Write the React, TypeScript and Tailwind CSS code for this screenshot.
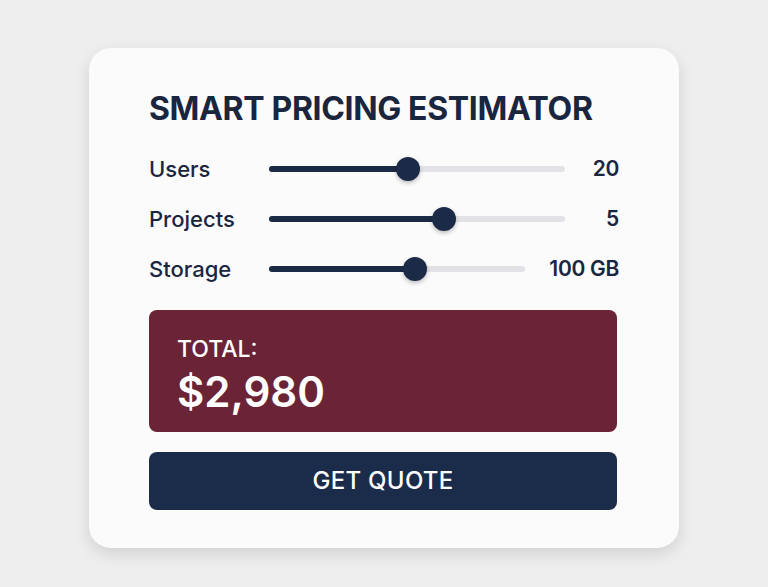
import React from "react";

const rows = [
  { label: "Users", value: "20", track: "w-[296px]", pct: 47 },
  { label: "Projects", value: "5", track: "w-[296px]", pct: 59 },
  { label: "Storage", value: "100 GB", track: "w-[256px]", pct: 57 },
];

function Slider({ track, pct }: { track: string; pct: number }) {
  return (
    <div className={`relative h-[6px] rounded-full bg-[#e3e3e7] ${track}`}>
      <div className="h-full rounded-full bg-[#1b2a47]" style={{ width: `${pct}%` }} />
      <div
        className="absolute top-1/2 h-[24px] w-[24px] -translate-x-1/2 -translate-y-1/2 rounded-full bg-[#1b2a47] shadow-[0_2px_4px_rgba(0,0,0,0.25)]"
        style={{ left: `${pct}%` }}
      />
    </div>
  );
}

export default function App() {
  return (
    <div className="min-h-[587px] w-full bg-[#eeeeee] pt-[48px] font-['Inter',sans-serif] text-[#1a2540]">
      <div className="mx-auto h-[500px] w-[590px] rounded-[22px] bg-[#fcfbfc] px-[60px] pt-[42px] shadow-[0_6px_16px_rgba(0,0,0,0.12)]">
        <h1 className="text-[32px] font-bold leading-[38px] tracking-[-0.35px]">SMART PRICING ESTIMATOR</h1>

        <div className="mt-[29px] flex flex-col gap-[26px]">
          {rows.map((r) => (
            <div key={r.label} className="flex h-[24px] items-center">
              <span className="w-[120px] text-[22px] font-medium">{r.label}</span>
              <Slider track={r.track} pct={r.pct} />
              <span className="flex-1 text-right text-[21px] font-semibold tracking-[-0.3px]">{r.value}</span>
            </div>
          ))}
        </div>

        <div className="mt-[29px] flex h-[122px] w-[468px] flex-col rounded-[8px] bg-[#6b2435] px-[28px] pt-[26px] text-white">
          <span className="text-[23px] font-medium leading-[26px]">TOTAL:</span>
          <span className="mt-[6px] text-[42px] font-semibold leading-[48px]">$2,980</span>
        </div>

        <button className="mt-[20px] flex h-[58px] w-[468px] items-center justify-center rounded-[8px] bg-[#1b2c4b] text-[24px] font-medium tracking-[0.3px] text-white">
          GET QUOTE
        </button>
      </div>
    </div>
  );
}
